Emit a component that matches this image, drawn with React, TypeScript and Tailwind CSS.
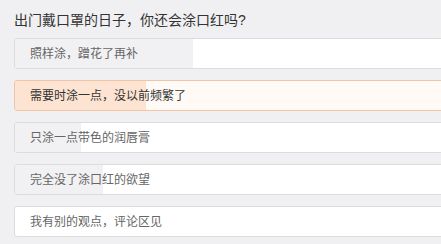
const options = [
  { text: '照样涂，蹭花了再补', pct: 178, active: false },
  { text: '需要时涂一点，没以前频繁了', pct: 131, active: true },
  { text: '只涂一点带色的润唇膏', pct: 66, active: false },
  { text: '完全没了涂口红的欲望', pct: 88, active: false },
  { text: '我有别的观点，评论区见', pct: 0, active: false },
]

export default function App() {
  return (
    <div
      className="w-[441px] h-[244px] overflow-hidden bg-[#f0f0f2] pl-[14px]"
      style={{ fontFamily: '"Liberation Sans", "Noto Sans CJK SC", sans-serif' }}
    >
      <div className="h-[38px] pt-[11px] text-[14px] leading-[18px] text-[#333]">
        出门戴口罩的日子，你还会涂口红吗?
      </div>
      <div className="flex flex-col gap-[11px] w-[460px]">
        {options.map(o => (
          <div
            key={o.text}
            className={`relative h-[31px] rounded-l-[3px] border overflow-hidden ${
              o.active ? 'border-[#f3c4a4] bg-[#fffaf6]' : 'border-[#dcdcde] bg-white'
            }`}
          >
            {o.pct > 0 && (
              <div
                className={`absolute left-0 top-0 bottom-0 ${o.active ? 'bg-[#fde3d2]' : 'bg-[#f1f1f3]'}`}
                style={{ width: o.pct }}
              />
            )}
            <div
              className={`relative h-full flex items-center pl-[15px] text-[12px] ${
                o.active ? 'text-[#333]' : 'text-[#666]'
              }`}
            >
              {o.text}
            </div>
          </div>
        ))}
      </div>
    </div>
  )
}
